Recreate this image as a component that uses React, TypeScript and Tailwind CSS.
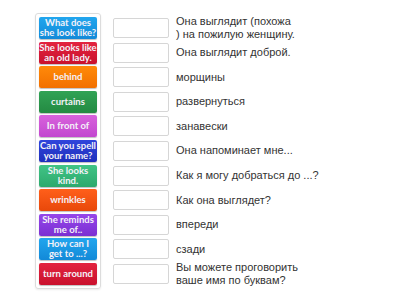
const cards = [
  { text: ["What does", "she look like?"], cls: "from-[#22a6ee] to-[#1289d8]" },
  { text: ["She looks like", "an old lady."], cls: "from-[#e3233f] to-[#c9102d]" },
  { text: ["behind"], cls: "from-[#ff8a0a] to-[#f27000]" },
  { text: ["curtains"], cls: "from-[#31a355] to-[#248a42]" },
  { text: ["In front of"], cls: "from-[#d862dc] to-[#c247cf]" },
  { text: ["Can you spell", "your name?"], cls: "from-[#3045dc] to-[#1f2fbc]" },
  { text: ["She looks", "kind."], cls: "from-[#41c486] to-[#2ca96d]" },
  { text: ["wrinkles"], cls: "from-[#ff5f1a] to-[#e8480a]" },
  { text: ["She reminds", "me of.."], cls: "from-[#9646ea] to-[#7b2fd2]" },
  { text: ["How can I", "get to ...?"], cls: "from-[#22a6ee] to-[#1289d8]" },
  { text: ["turn around"], cls: "from-[#e3233f] to-[#c9102d]" },
];

const answers = [
  ["Она выглядит (похожа", ") на пожилую женщину."],
  ["Она выглядит доброй."],
  ["морщины"],
  ["развернуться"],
  ["занавески"],
  ["Она напоминает мне..."],
  ["Как я могу добраться до ...?"],
  ["Как она выглядет?"],
  ["впереди"],
  ["сзади"],
  ["Вы можете проговорить", "ваше имя по буквам?"],
];

export default function App() {
  return (
    <div className="w-[400px] h-[300px] bg-white overflow-hidden flex items-start pt-[13px] pl-[35px] font-['Liberation_Sans',sans-serif]">
      {/* card column */}
      <div className="w-[66px] flex flex-col gap-[2.6px] p-[3px] border border-[#dcdcdc] rounded-[3px] shadow-[0_1px_2px_rgba(0,0,0,0.08)]">
        {cards.map((c, i) => (
          <div
            key={i}
            className={`h-[22px] rounded-[2px] bg-gradient-to-b ${c.cls} flex flex-col items-center justify-center text-[#f4f1f8] font-['Lato',sans-serif] font-bold text-[9.5px] leading-[10px] text-center shadow-[0_1px_1px_rgba(0,0,0,0.25)]`}
          >
            {c.text.map((t, j) => (
              <span key={j} className="whitespace-nowrap">{t}</span>
            ))}
          </div>
        ))}
      </div>

      {/* answer column */}
      <div className="ml-[12px] pt-[4px] flex flex-col gap-[2.6px]">
        {answers.map((a, i) => (
          <div key={i} className="h-[22px] flex items-center">
            <div className="w-[56px] h-[20px] border border-[#d6d6d6] rounded-[2px] bg-white shrink-0" />
            <div className="ml-[7px] text-[11px] leading-[13px] text-[#333]">
              {a.map((t, j) => (
                <div key={j} className="whitespace-nowrap">{t}</div>
              ))}
            </div>
          </div>
        ))}
      </div>
    </div>
  );
}
